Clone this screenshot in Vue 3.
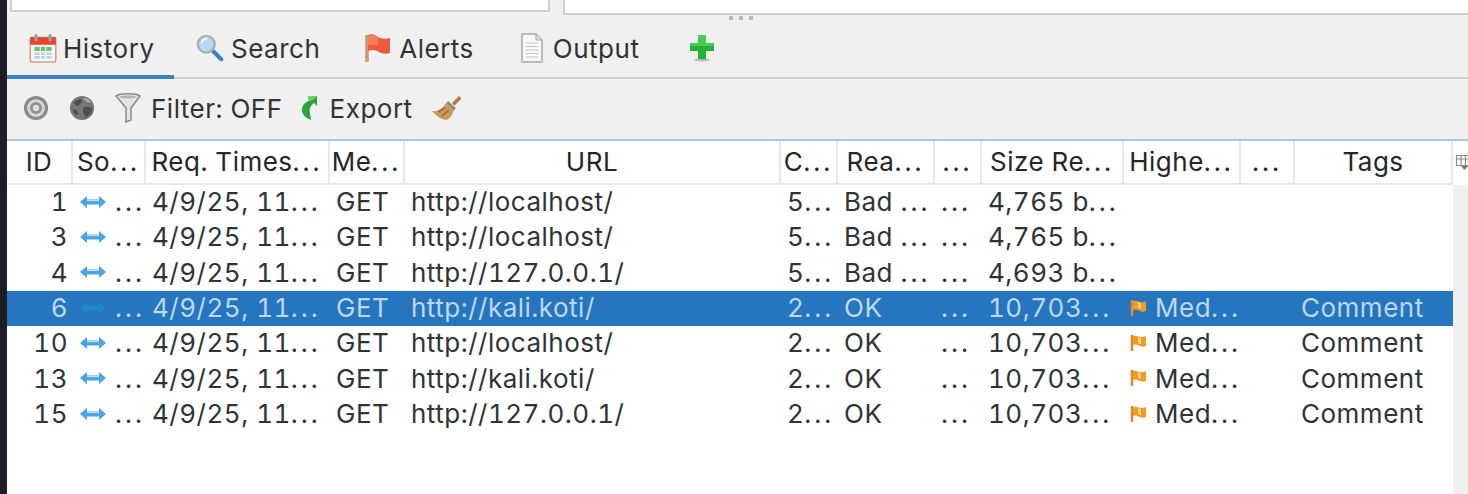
<script setup>
const columns = ['ID', 'So...', 'Req. Times...', 'Me...', 'URL', 'C...', 'Rea...', '...', 'Size Re...', 'Highe...', '...', 'Tags']

const rows = [
  { id: 1, url: 'http://localhost/', code: '5...', reason: 'Bad ...', size: '4,765 b...' },
  { id: 3, url: 'http://localhost/', code: '5...', reason: 'Bad ...', size: '4,765 b...' },
  { id: 4, url: 'http://127.0.0.1/', code: '5...', reason: 'Bad ...', size: '4,693 b...' },
  { id: 6, url: 'http://kali.koti/', code: '2...', reason: 'OK', size: '10,703...', alert: 'Med...', tags: 'Comment', selected: true },
  { id: 10, url: 'http://localhost/', code: '2...', reason: 'OK', size: '10,703...', alert: 'Med...', tags: 'Comment' },
  { id: 13, url: 'http://kali.koti/', code: '2...', reason: 'OK', size: '10,703...', alert: 'Med...', tags: 'Comment' },
  { id: 15, url: 'http://127.0.0.1/', code: '2...', reason: 'OK', size: '10,703...', alert: 'Med...', tags: 'Comment' },
]

// the toolkit's ellipsis is wider than the font's dots, so they get their own span
const base = (text) => (text.endsWith('...') ? text.slice(0, -3) : text)
const clipped = (text) => text.endsWith('...')
const middleCells = (row) => ['4/9/25, 11...', 'GET', row.url, row.code, row.reason, '...', row.size]
</script>

<template>
  <div class="screen">
    <div class="edge"></div>
    <div class="workspace">
      <div class="top-panes">
        <div class="pane pane-left"></div>
        <div class="pane pane-right"></div>
      </div>
      <div class="grip"><i></i><i></i><i></i></div>

      <div class="tabs">
        <div class="tab tab-active">
          <svg class="tab-icon" viewBox="0 0 26 28">
            <rect x="1" y="4" width="24" height="23" rx="1.5" fill="#f4f6f8" stroke="#d8705a" />
            <rect x="1" y="4" width="24" height="7" fill="#e8452e" />
            <rect x="5" y="1" width="3" height="7" rx="1.5" fill="#9aa0a4" />
            <rect x="18" y="1" width="3" height="7" rx="1.5" fill="#9aa0a4" />
            <rect x="5" y="13" width="16" height="4" fill="#6cc06a" />
            <path d="M5 18h16v6H5z" fill="#b9d2e8" />
            <path d="M10.5 13v11M15.5 13v11M5 17.5h16M5 21h16" stroke="#fff" stroke-width="1" />
          </svg>
          <span>History</span>
        </div>
        <div class="tab">
          <svg class="tab-icon" viewBox="0 0 30 30">
            <path d="M17 17l10 10" stroke="#3d7fc0" stroke-width="4.5" stroke-linecap="round" />
            <circle cx="11" cy="11" r="9" fill="#b9d8f5" stroke="#a9adb0" stroke-width="2.5" />
            <path d="M6 10a6 6 0 0 1 6-5" stroke="#fff" stroke-width="2" fill="none" />
          </svg>
          <span>Search</span>
        </div>
        <div class="tab">
          <svg class="tab-icon" viewBox="0 0 28 30">
            <path d="M3 2v27" stroke="#c99a6a" stroke-width="3.5" />
            <path d="M4 2c5-2 8 1 12 3 3 1 6 1 10 0v15c-4 1-7 1-11-1-3-2-7-3-11-1z" fill="#ee5a3c" />
            <path d="M4 2c5-2 8 1 10 2v9c-3-1-6-2-10-1z" fill="#f77a5a" />
          </svg>
          <span>Alerts</span>
        </div>
        <div class="tab">
          <svg class="tab-icon" viewBox="0 0 24 30">
            <path d="M2 1h14l6 6v22H2z" fill="#f8f8f8" stroke="#a8a8a8" stroke-width="1.5" />
            <path d="M16 1v6h6" fill="#ddd" stroke="#a8a8a8" />
            <path d="M6 10h12M6 13.5h12M6 17h12M6 20.500h12M6 24h12" stroke="#c4c4c4" stroke-width="1.200" />
          </svg>
          <span>Output</span>
        </div>
        <svg class="add-icon" viewBox="0 0 26 28">
          <ellipse cx="13" cy="26" rx="8" ry="1.500" fill="#bbb" />
          <path d="M9 1h8v8h8v8h-8v8H9v-8H1V9h8z" fill="#25b135" />
          <path d="M9 1h8v8h8v3H1V9h8z" fill="#45cc50" />
        </svg>
      </div>

      <div class="toolbar">
        <svg class="tool-icon" viewBox="0 0 28 28">
          <circle cx="14" cy="14" r="13" fill="#8b8b8b" />
          <circle cx="14" cy="14" r="9.500" fill="#d8d8d8" />
          <circle cx="14" cy="14" r="6.500" fill="#8f8f8f" />
          <circle cx="14" cy="14" r="3.500" fill="#dcdcdc" />
        </svg>
        <svg class="tool-icon globe" viewBox="0 0 28 28">
          <circle cx="14" cy="14" r="13" fill="#777" />
          <path d="M5 8c4-4 7-4 9-3 1 3-2 4-3 6-2 1-4 1-6-3zM16 13c4-1 7 0 9 2-1 5-4 8-7 9-2-3-4-7-2-11zM4 16c3-1 5 1 6 4l-2 2c-2-1-3-3-4-6z" fill="#4d4d4d" />
          <path d="M15 3c4 0 7 2 9 5-3 1-6 0-9-5z" fill="#a8a8a8" />
        </svg>
        <svg class="funnel" viewBox="0 0 26 30">
          <path d="M1 3c4-3 20-3 24 0L16 15v12l-5 2V15z" fill="#e4e4e4" stroke="#8a8a8a" stroke-width="1.500" />
          <ellipse cx="13" cy="4" rx="9" ry="1.500" fill="#b5b5b5" />
        </svg>
        <span class="tool-label">Filter: OFF</span>
        <svg class="export-icon" viewBox="0 0 18 26">
          <path d="M8 1h9v10l-3-3c-3 2-5 5-4 10l1 7C5 23 1 18 2 13c1-4 4-6 8-8z" fill="#2fa33a" />
          <path d="M8 1h9l-3 3-4 2-2-1z" fill="#74d06f" />
        </svg>
        <span class="tool-label export-label">Export</span>
        <svg class="broom" viewBox="0 0 30 26">
          <path d="M20 8l7-7 2.500 2.500-7 7z" fill="#b5773e" />
          <path d="M16 6l8 7-2 2.500-8-7z" fill="#8a8d80" />
          <path d="M14 8l8 7c-1 4-4 8-7 10-5 0-11-4-15-9 6 1 11-3 14-8z" fill="#c89b58" />
          <path d="M6 17l7-4M10 21l7-6" stroke="#8d6a35" stroke-width="1.200" />
        </svg>
      </div>

      <div class="table-wrap">
        <div class="table">
          <div class="row head">
            <div v-for="(col, i) in columns" :key="i" class="head-cell">
              <span>{{ base(col) }}<span v-if="clipped(col)" class="dots">...</span></span>
            </div>
          </div>
          <div v-for="row in rows" :key="row.id" class="row body" :class="{ selected: row.selected }">
            <div class="cell id">{{ row.id }}</div>
            <div class="cell source">
              <svg class="arrow" viewBox="0 0 28 14">
                <path d="M1 7l7-6v3.500h12V1l7 6-7 6V9.500H8V13z" :fill="row.selected ? '#1f86c9' : '#4ea3e2'" />
                <path v-if="!row.selected" d="M8 5.500h12" stroke="#b8def8" stroke-width="1.200" />
              </svg>
              <span class="dots">...</span>
            </div>
            <div v-for="(text, i) in middleCells(row)" :key="i" class="cell">
              {{ base(text) }}<span v-if="clipped(text)" class="dots">...</span>
            </div>
            <div class="cell alert">
              <svg v-if="row.alert" class="flag" viewBox="0 0 18 18">
                <path d="M2 1v16" stroke="#d98a2a" stroke-width="2.500" />
                <path d="M3 2c4-1 5 1 8 1 2 0 3 0 5-1v10c-2 1-4 1-6 0-3-1-4-2-7-1z" fill="#f59a1e" />
                <path d="M8 3l3 1v6l-3-1z" fill="#fbd58a" />
              </svg>
              <span v-if="row.alert">{{ base(row.alert) }}<span class="dots">...</span></span>
            </div>
            <div class="cell"></div>
            <div class="cell">{{ row.tags }}</div>
          </div>
        </div>
        <div class="side">
          <div class="corner">
            <svg class="corner-icon" viewBox="0 0 16 18">
              <path d="M1.500 1.500h13v10h-13zM1.500 5h13M6 1.500v10M10.500 1.500v10" fill="none" stroke="#8b8b8b" stroke-width="1.200" />
              <path d="M6 12h7l-3.500 4z" fill="#777" />
            </svg>
          </div>
        </div>
      </div>
    </div>
  </div>
</template>

<style>
html, body {
  margin: 0;
  background: #f0f0f0;
}
</style>

<style scoped>
.screen {
  display: flex;
  width: 1468px;
  height: 494px;
  overflow: hidden;
  background: #f0f0f0;
  color: #2e3436;
  font-family: Inter, "Noto Sans", sans-serif;
  font-size: 26px;
  letter-spacing: 0.5px;
  font-variant-numeric: tabular-nums;
}

.dots {
  letter-spacing: 3px;
}

.edge {
  width: 7px;
  background: #1d1d24;
  flex: none;
}

.workspace {
  flex: 1;
  min-width: 0;
  display: flex;
  flex-direction: column;
}

.top-panes {
  display: flex;
  height: 14px;
  align-items: flex-start;
  flex: none;
}

.pane {
  background: #fff;
  border: 2px solid #cfcfcf;
  border-top: 0;
  box-sizing: border-box;
}

.pane-left {
  width: 540px;
  height: 12px;
  margin-left: 3px;
}

.pane-right {
  flex: 1;
  height: 15px;
  margin-left: 13px;
  border-right: 0;
}

.grip {
  display: flex;
  gap: 6px;
  height: 8px;
  margin-left: 722px;
  padding-top: 2px;
  box-sizing: border-box;
  flex: none;
}

.grip i {
  width: 4px;
  height: 4px;
  background: #b9b9b9;
}

.tabs {
  display: flex;
  align-items: center;
  height: 57px;
  box-sizing: border-box;
  border-bottom: 2px solid #cfcfcf;
  flex: none;
}

.tab {
  display: flex;
  align-items: center;
  gap: 7px;
  height: 100%;
  padding: 0 22px 3px;
  box-sizing: border-box;
}

.tab-active {
  width: 167px;
  gap: 6px;
  position: relative;
}

/* blue line sits over the grey tab border */
.tab-active::after {
  content: "";
  position: absolute;
  left: 0;
  right: 0;
  bottom: -2px;
  height: 4px;
  background: #3b82c4;
}

.tab-icon {
  width: 28px;
  height: 30px;
  flex: none;
}

.add-icon {
  width: 26px;
  height: 28px;
  margin: 0 0 3px 28px;
}

.toolbar {
  display: flex;
  align-items: center;
  height: 60px;
  padding: 0 0 2px 16px;
  box-sizing: border-box;
  flex: none;
}

.tool-icon {
  width: 26px;
  height: 26px;
  flex: none;
}

.globe {
  margin-left: 20px;
}

.funnel {
  width: 26px;
  height: 30px;
  margin-left: 20px;
  flex: none;
}

.tool-label {
  margin-left: 10px;
}

.export-label {
  margin-left: 12px;
}

.export-icon {
  width: 18px;
  height: 26px;
  margin-left: 17px;
}

.broom {
  width: 30px;
  height: 26px;
  margin-left: 19px;
}

.table-wrap {
  flex: 1;
  display: flex;
  min-height: 0;
  border-top: 2px solid #a6c6e3;
}

.table {
  width: 1446px;
  flex: none;
  background: #fff;
  overflow: hidden;
}

.side {
  flex: 1;
}

.corner {
  height: 44px;
  background: #fff;
  display: flex;
  align-items: center;
  padding-left: 2px;
}

.corner-icon {
  width: 16px;
  height: 18px;
}

.row {
  display: grid;
  grid-template-columns: 66px 73px 184px 75px 376px 57px 97px 47px 142px 117px 54px 158px;
}

.head {
  height: 44px;
  color: #232729;
}

.head-cell {
  display: flex;
  align-items: center;
  justify-content: center;
  padding-bottom: 2px;
  box-sizing: border-box;
  white-space: nowrap;
  overflow: hidden;
  border-right: 2px solid #e8e8e8;
  border-bottom: 2px solid #e8e8e8;
}

.body {
  height: 35.330px;
  align-items: center;
}

.selected {
  background: #2675bf;
  color: #bcd8f2;
}

.cell {
  padding: 0 0 2px 6px;
  white-space: nowrap;
  overflow: hidden;
  box-sizing: border-box;
  line-height: 33px;
}

.cell.id {
  text-align: right;
  padding-right: 5px;
}

.cell.source {
  display: flex;
  align-items: center;
  gap: 8px;
}

.arrow {
  width: 28px;
  height: 14px;
  flex: none;
}

.cell.alert {
  display: flex;
  align-items: center;
  gap: 7px;
}

.flag {
  width: 18px;
  height: 18px;
  flex: none;
}
</style>
